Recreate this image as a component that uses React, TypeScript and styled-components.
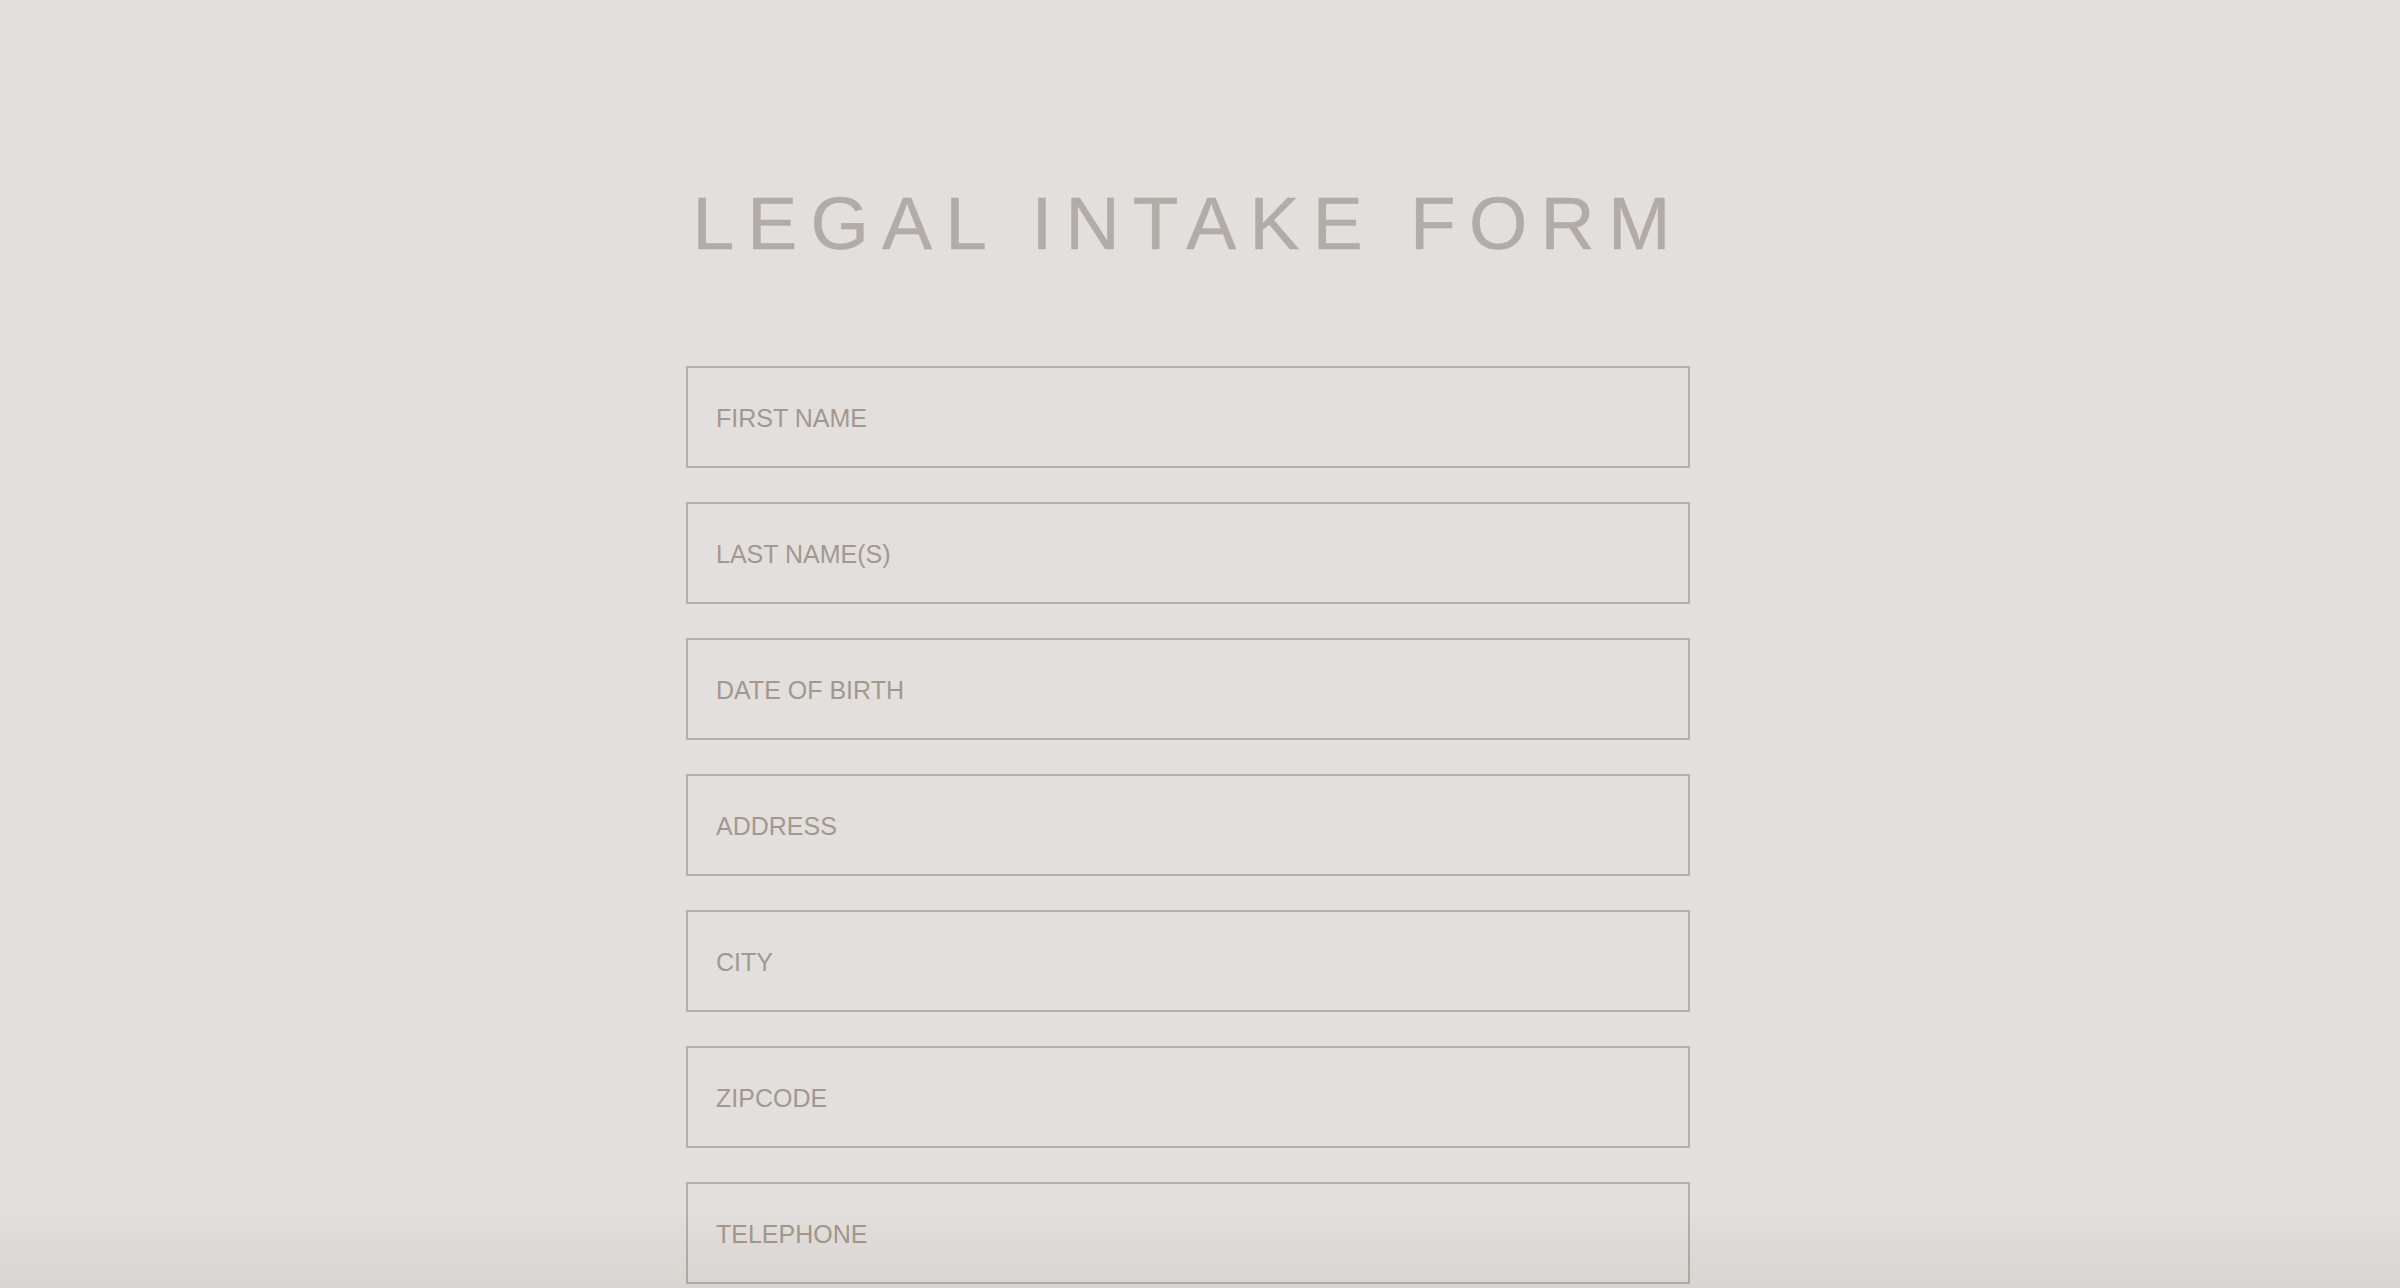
import React from "react";
import styled, { createGlobalStyle } from "styled-components";

const GlobalStyle = createGlobalStyle`
  html, body {
    margin: 0;
    padding: 0;
    height: 100%;
    overflow: hidden;
    background: #e2dfdc;
    font-family: "Liberation Sans", Arial, Helvetica, sans-serif;
  }
  #root { min-height: 100%; }
`;

const Page = styled.main`
  box-sizing: border-box;
  min-height: 1288px;
  padding: 186px 24px 0 0;
  background: #e2dfdc;
`;

const Form = styled.form`
  width: 1004px;
  margin: 0 auto;
  display: flex;
  flex-direction: column;
  gap: 34px;
`;

const Title = styled.h1`
  margin: 0 0 71px;
  font-family: "Liberation Sans", Arial, Helvetica, sans-serif;
  font-weight: 400;
  font-size: 75px;
  line-height: 75px;
  letter-spacing: 13.2px;
  text-align: center;
  color: #b2aba6;
  text-transform: uppercase;
  -webkit-text-stroke: 0.4px #b2aba6;
`;

const Field = styled.input`
  box-sizing: border-box;
  display: block;
  width: 100%;
  height: 102px;
  margin: 0;
  padding: 2px 28px 0;
  border: 2px solid #b5aea9;
  border-radius: 0;
  background: transparent;
  font-family: "Liberation Sans", Arial, Helvetica, sans-serif;
  font-size: 25px;
  color: #8f857e;
  outline: none;
  &::placeholder {
    color: #a3988f;
    opacity: 1;
  }
`;

const BottomShade = styled.div`
  position: fixed;
  left: 0;
  right: 0;
  bottom: 0;
  height: 80px;
  pointer-events: none;
  background: linear-gradient(to bottom, rgba(80, 60, 40, 0) 0%, rgba(80, 60, 40, 0.06) 100%);
`;

const fields = [
  "FIRST NAME",
  "LAST NAME(S)",
  "DATE OF BIRTH",
  "ADDRESS",
  "CITY",
  "ZIPCODE",
  "TELEPHONE",
];

export default function App() {
  return (
    <>
      <GlobalStyle />
      <Page>
        <Form onSubmit={(e) => e.preventDefault()}>
          <Title>Legal Intake Form</Title>
          {fields.map((f) => (
            <Field key={f} type="text" placeholder={f} aria-label={f} />
          ))}
        </Form>
      </Page>
      <BottomShade />
    </>
  );
}
